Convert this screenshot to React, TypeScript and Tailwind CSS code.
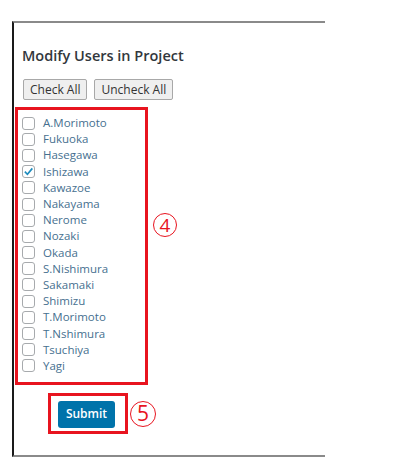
import React, { useState } from 'react';

const USERS = [
  'A.Morimoto', 'Fukuoka', 'Hasegawa', 'Ishizawa', 'Kawazoe', 'Nakayama', 'Nerome', 'Nozaki',
  'Okada', 'S.Nishimura', 'Sakamaki', 'Shimizu', 'T.Morimoto', 'T.Nshimura', 'Tsuchiya', 'Yagi',
];

const Check = () => (
  <svg viewBox="0 0 12 12" className="w-[11px] h-[11px]">
    <path d="M2 6.2 L4.8 9 L10.2 2.6" fill="none" stroke="#1e8cbe" strokeWidth="1.8" />
  </svg>
);

const App: React.FC = () => {
  const [checked, setChecked] = useState<Record<string, boolean>>({ Ishizawa: true });

  const setAll = (v: boolean) => setChecked(Object.fromEntries(USERS.map(u => [u, v])));

  return (
    <div className="w-[411px] h-[464px] bg-white overflow-hidden pt-[21px] pl-[12px]" style={{ fontFamily: '"Open Sans", "Noto Sans", sans-serif' }}>
      <div className="w-[313px] h-[436px] border-l-2 border-l-[#1a1a1a] border-t-2 border-t-[#8a8a8a] border-b-2 border-b-[#8a8a8a] pt-[23px]">
        <h2 className="ml-[8px] text-[14.5px] leading-[20px] font-semibold text-[#32373c]">Modify Users in Project</h2>

        {/* check / uncheck */}
        <div className="ml-[9px] mt-[13px] flex gap-[7px]">
          <button onClick={() => setAll(true)} className="h-[21px] px-[6px] border border-[#a8a8a8] rounded-[2px] bg-[#efefef] text-[12px] leading-[19px] text-[#333]">Check All</button>
          <button onClick={() => setAll(false)} className="h-[21px] px-[6px] border border-[#a8a8a8] rounded-[2px] bg-[#efefef] text-[12px] leading-[19px] text-[#333]">Uncheck All</button>
        </div>

        {/* user list */}
        <div className="ml-[1px] mt-[7px] flex items-start">
          <div className="w-[133px] h-[278px] border-[3px] border-[#e8141f] pl-[4px] pt-[5px]">
            {USERS.map(u => (
              <label key={u} className="flex items-center h-[16.2px] cursor-pointer" onClick={() => setChecked(p => ({ ...p, [u]: !p[u] }))}>
                <span className="w-[13px] h-[13px] border border-[#a7aaad] rounded-[3px] bg-white flex items-center justify-center">
                  {checked[u] && <Check />}
                </span>
                <span className="ml-[8px] text-[11.5px] leading-[16px] text-[#46708f]">{u}</span>
              </label>
            ))}
          </div>
          <div className="ml-[5px] mt-[106px] w-[24px] h-[24px] rounded-full border-[1.5px] border-[#e8141f] text-[#e8141f] flex items-center justify-center text-[19px] leading-none">4</div>
        </div>

        {/* submit */}
        <div className="ml-[34px] mt-[8px] flex items-center">
          <div className="w-[80px] h-[41px] border-[3px] border-[#e8141f] pl-[7px] pt-[4px]">
            <button className="w-[57px] h-[27px] bg-[#0073aa] rounded-[3px] text-white text-[12px] font-semibold">Submit</button>
          </div>
          <div className="ml-[2px] w-[26px] h-[26px] rounded-full border-[1.5px] border-[#e8141f] text-[#e8141f] flex items-center justify-center text-[21px] leading-none">5</div>
        </div>
      </div>
    </div>
  );
};

export default App;
